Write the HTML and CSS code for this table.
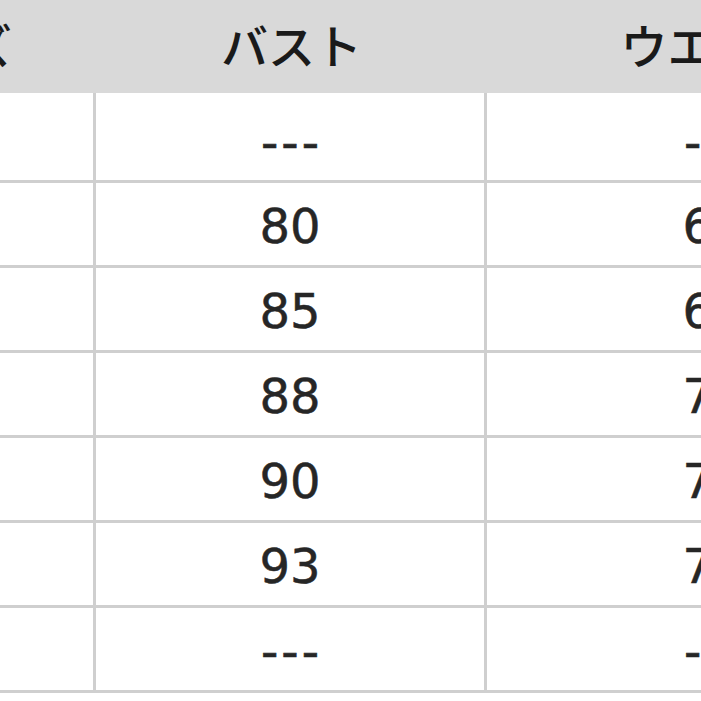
FILE: index.html
```html
<!DOCTYPE html>
<html lang="ja">
<head>
<meta charset="utf-8">
<title>サイズ表</title>
<link rel="stylesheet" href="styles.css">
</head>
<body>
<div class="sheet">
  <div class="row head">
    <div class="cell c1">サイズ</div>
    <div class="cell c2">バスト</div>
    <div class="cell c3">ウエスト</div>
  </div>
  <div class="row first">
    <div class="cell c1">XS</div>
    <div class="cell c2 dash">---</div>
    <div class="cell c3 dash">---</div>
  </div>
  <div class="row">
    <div class="cell c1">S</div>
    <div class="cell c2">80</div>
    <div class="cell c3">63</div>
  </div>
  <div class="row">
    <div class="cell c1">M</div>
    <div class="cell c2">85</div>
    <div class="cell c3">68</div>
  </div>
  <div class="row">
    <div class="cell c1">L</div>
    <div class="cell c2">88</div>
    <div class="cell c3">70</div>
  </div>
  <div class="row">
    <div class="cell c1">XL</div>
    <div class="cell c2">90</div>
    <div class="cell c3">73</div>
  </div>
  <div class="row">
    <div class="cell c1">2XL</div>
    <div class="cell c2">93</div>
    <div class="cell c3">76</div>
  </div>
  <div class="row">
    <div class="cell c1">3XL</div>
    <div class="cell c2 dash">---</div>
    <div class="cell c3 dash">---</div>
  </div>
</div>
</body>
</html>
```

FILE: styles.css
```css
html, body {
  margin: 0;
  padding: 0;
  background: #ffffff;
  overflow: hidden;
  width: 701px;
  height: 701px;
}

.sheet {
  margin-left: -212px;
  width: 1154px;
}

.row {
  display: flex;
  height: 85px;
}

.row.head {
  height: 93px;
  background: #d9d9d9;
}

.row.first {
  height: 90px;
}

.cell {
  box-sizing: border-box;
  display: flex;
  align-items: center;
  justify-content: center;
  border-right: 3px solid #cfcfcf;
  border-bottom: 3px solid #cfcfcf;
  color: #262626;
  font-family: "DejaVu Sans", sans-serif;
  font-size: 48px;
  padding-top: 4px;
  -webkit-text-stroke: 0.5px #262626;
}

.first .cell {
  padding-top: 10px;
}

.dash {
  letter-spacing: 3px;
  text-indent: 3px;
  -webkit-text-stroke: 0.6px #262626;
}

.head .cell {
  border: none;
  color: #1a1a1a;
  font-family: "Noto Sans CJK JP", sans-serif;
  font-size: 47px;
  font-weight: 500;
  padding-top: 0;
  padding-bottom: 6px;
  -webkit-text-stroke: 0;
}

.c1 { width: 308px; }
.c2 { width: 391px; }
.c3 { width: 455px; }
```
